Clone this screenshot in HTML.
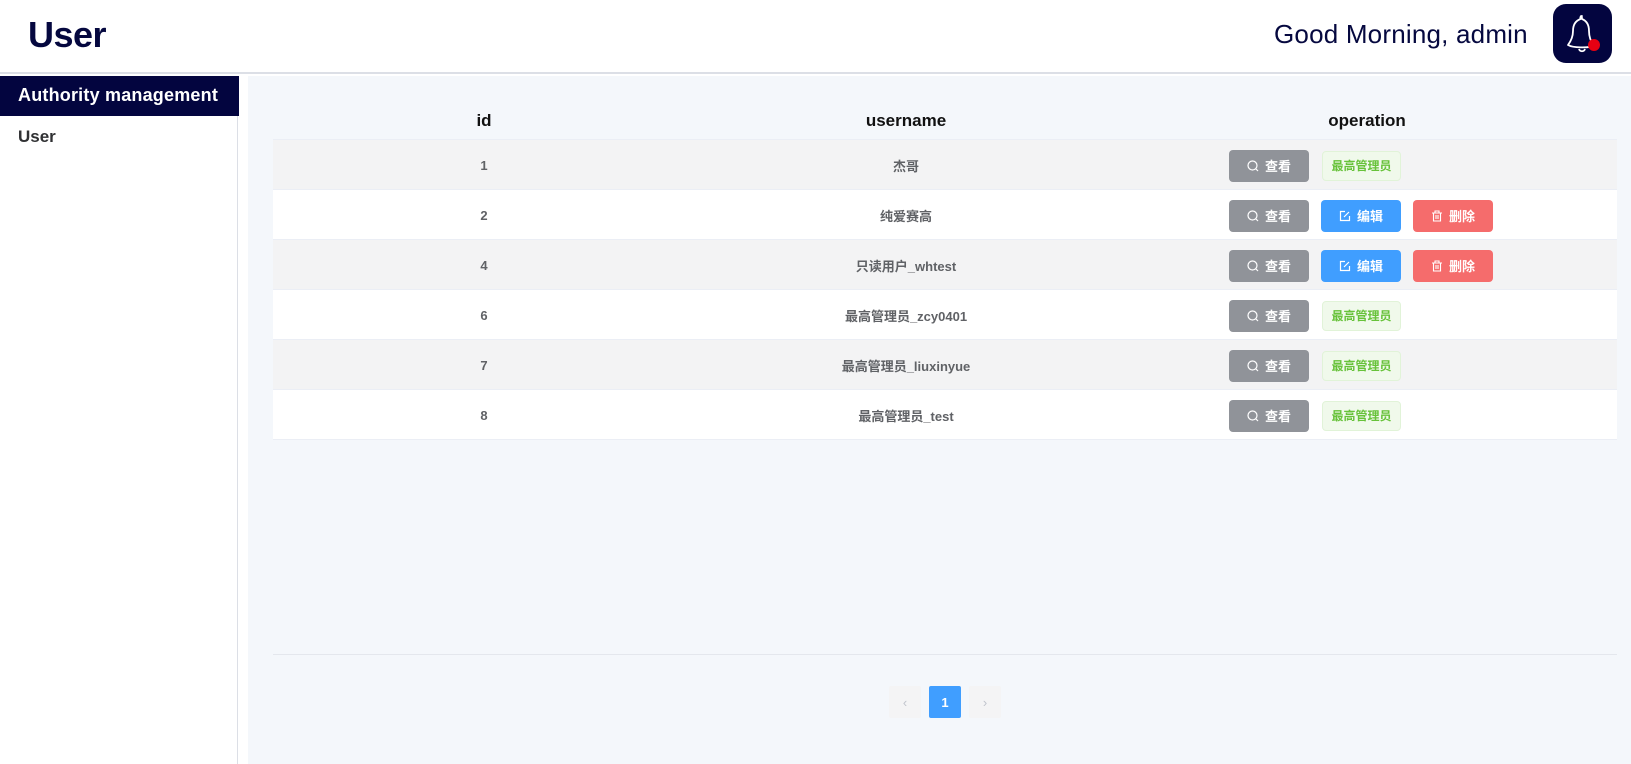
<!DOCTYPE html>
<html><head><meta charset="utf-8"><style>
*{margin:0;padding:0;box-sizing:border-box}
body{width:1631px;height:764px;overflow:hidden;background:#fff;font-family:"Liberation Sans","Noto Sans CJK SC",sans-serif;position:relative}
.abs{position:absolute}
.hdr{left:0;top:0;width:1631px;height:74px;background:#fff;border-bottom:2px solid #dcdfe6}
.title{left:28px;top:14px;font-size:36px;font-weight:bold;color:#05083f;letter-spacing:-0.5px}
.greet{left:1274px;top:19px;font-size:26px;color:#05083f;letter-spacing:0.2px}
.bell{left:1553px;top:4px;width:59px;height:59px;border-radius:13px;background:#03053f}
.side{left:0;top:76px;width:248px;height:688px;background:#fff}
.sline{left:237px;top:76px;width:1px;height:688px;background:#dcdfe6}
.act{left:0;top:76px;width:239px;height:40px;background:#03053f;color:#fff;font-weight:bold;font-size:18px;padding:9px 0 0 18px;letter-spacing:0.2px}
.su{left:18px;top:127px;font-size:17px;font-weight:bold;color:#303133}
.main{left:248px;top:76px;width:1383px;height:688px;background:#f4f7fb}
.th{top:111px;font-size:17px;font-weight:bold;color:#111;transform:translateX(-50%)}
.row{left:273px;width:1344px;height:50px;border-bottom:1px solid #ebeef5}
.cell{font-size:13px;font-weight:bold;color:#606266;transform:translateX(-50%);height:50px;display:flex;align-items:center;white-space:nowrap}
.btn{width:80px;height:32px;border-radius:4px;color:#fff;font-size:13px;font-weight:bold;display:flex;align-items:center;justify-content:center;gap:6px;line-height:1}
.g{background:#909399}.b{background:#409eff}.r{background:#f56c6c}
.tag{width:79px;height:30px;border-radius:4px;background:#f0f9eb;border:1px solid #e1f3d8;color:#67c23a;font-size:12px;font-weight:bold;display:flex;align-items:center;justify-content:center;line-height:1}
.pg{width:32px;height:32px;border-radius:2px;background:#f4f4f5;color:#c0c4cc;font-size:13px;display:flex;align-items:center;justify-content:center}
</style></head><body>
<div class="abs hdr"></div>
<div class="abs title">User</div>
<div class="abs greet">Good Morning, admin</div>
<div class="abs bell"><svg width="59" height="59" viewBox="0 0 59 59"><path d="M29 12c-1.5 0-2 1.5-1.5 3C22 17 20 21 20 27c0 6-2 10-5 14c5 3 20 3 26 1c-3-4-5-9-5-15c0-6-2-10-7-12c0-1.5 0-3-1-3z" fill="none" stroke="#fff" stroke-width="1.8" stroke-linejoin="round"/><path d="M26 45c1 3 5 3 6 0" fill="none" stroke="#fff" stroke-width="1.8"/><circle cx="41" cy="41" r="6" fill="#e60012"/></svg></div>
<div class="abs side"></div>
<div class="abs sline"></div>
<div class="abs act">Authority management</div>
<div class="abs su">User</div>
<div class="abs main"></div>
<div class="abs th" style="left:484px">id</div>
<div class="abs th" style="left:906px">username</div>
<div class="abs th" style="left:1367px">operation</div>
<div class="abs" style="left:273px;top:139px;width:1344px;height:1px;background:#ebeef5"></div>

<div class="abs row" style="top:140px;background:#f3f3f4"></div>
<div class="abs row" style="top:190px;background:#fff"></div>
<div class="abs row" style="top:240px;background:#f3f3f4"></div>
<div class="abs row" style="top:290px;background:#fff"></div>
<div class="abs row" style="top:340px;background:#f3f3f4"></div>
<div class="abs row" style="top:390px;background:#fff"></div>

<div class="abs cell" style="left:484px;top:140px">1</div><div class="abs cell" style="left:906px;top:140px">杰哥</div>
<div class="abs cell" style="left:484px;top:190px">2</div><div class="abs cell" style="left:906px;top:190px">纯爱赛高</div>
<div class="abs cell" style="left:484px;top:240px">4</div><div class="abs cell" style="left:906px;top:240px">只读用户_whtest</div>
<div class="abs cell" style="left:484px;top:290px">6</div><div class="abs cell" style="left:906px;top:290px">最高管理员_zcy0401</div>
<div class="abs cell" style="left:484px;top:340px">7</div><div class="abs cell" style="left:906px;top:340px">最高管理员_liuxinyue</div>
<div class="abs cell" style="left:484px;top:390px">8</div><div class="abs cell" style="left:906px;top:390px">最高管理员_test</div>

<div class="abs btn g" style="left:1229px;top:150px"><svg width="12" height="12"><circle cx="5.5" cy="5.5" r="4.5" fill="none" stroke="#fff" stroke-width="1.2"/><path d="M9 9l2 2" stroke="#fff" stroke-width="1.2"/></svg>查看</div>
<div class="abs tag" style="left:1322px;top:151px">最高管理员</div>

<div class="abs btn g" style="left:1229px;top:200px"><svg width="12" height="12"><circle cx="5.5" cy="5.5" r="4.5" fill="none" stroke="#fff" stroke-width="1.2"/><path d="M9 9l2 2" stroke="#fff" stroke-width="1.2"/></svg>查看</div>
<div class="abs btn b" style="left:1321px;top:200px"><svg width="12" height="12"><path d="M6 1.5H1.5v9h9V6" fill="none" stroke="#fff" stroke-width="1.2"/><path d="M5 7l5-5" stroke="#fff" stroke-width="1.2"/></svg>编辑</div>
<div class="abs btn r" style="left:1413px;top:200px"><svg width="12" height="12"><path d="M1 3h10M4 3V1h4v2M2.5 3v8h7V3M5 5v4M7 5v4" fill="none" stroke="#fff" stroke-width="1.1"/></svg>删除</div>

<div class="abs btn g" style="left:1229px;top:250px"><svg width="12" height="12"><circle cx="5.5" cy="5.5" r="4.5" fill="none" stroke="#fff" stroke-width="1.2"/><path d="M9 9l2 2" stroke="#fff" stroke-width="1.2"/></svg>查看</div>
<div class="abs btn b" style="left:1321px;top:250px"><svg width="12" height="12"><path d="M6 1.5H1.5v9h9V6" fill="none" stroke="#fff" stroke-width="1.2"/><path d="M5 7l5-5" stroke="#fff" stroke-width="1.2"/></svg>编辑</div>
<div class="abs btn r" style="left:1413px;top:250px"><svg width="12" height="12"><path d="M1 3h10M4 3V1h4v2M2.5 3v8h7V3M5 5v4M7 5v4" fill="none" stroke="#fff" stroke-width="1.1"/></svg>删除</div>

<div class="abs btn g" style="left:1229px;top:300px"><svg width="12" height="12"><circle cx="5.5" cy="5.5" r="4.5" fill="none" stroke="#fff" stroke-width="1.2"/><path d="M9 9l2 2" stroke="#fff" stroke-width="1.2"/></svg>查看</div>
<div class="abs tag" style="left:1322px;top:301px">最高管理员</div>
<div class="abs btn g" style="left:1229px;top:350px"><svg width="12" height="12"><circle cx="5.5" cy="5.5" r="4.5" fill="none" stroke="#fff" stroke-width="1.2"/><path d="M9 9l2 2" stroke="#fff" stroke-width="1.2"/></svg>查看</div>
<div class="abs tag" style="left:1322px;top:351px">最高管理员</div>
<div class="abs btn g" style="left:1229px;top:400px"><svg width="12" height="12"><circle cx="5.5" cy="5.5" r="4.5" fill="none" stroke="#fff" stroke-width="1.2"/><path d="M9 9l2 2" stroke="#fff" stroke-width="1.2"/></svg>查看</div>
<div class="abs tag" style="left:1322px;top:401px">最高管理员</div>

<div class="abs" style="left:273px;top:654px;width:1344px;height:1px;background:#e4e7ed"></div>
<div class="abs pg" style="left:889px;top:686px">‹</div>
<div class="abs pg" style="left:929px;top:686px;background:#409eff;color:#fff;font-weight:bold">1</div>
<div class="abs pg" style="left:969px;top:686px">›</div>
</body></html>
